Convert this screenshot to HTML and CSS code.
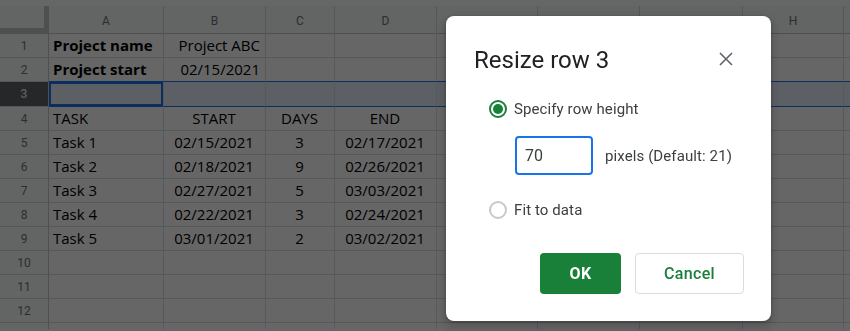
FILE: index.html
```html
<!DOCTYPE html>
<html lang="en">
<head>
<meta charset="utf-8">
<title>Resize row 3</title>
<link rel="stylesheet" href="styles.css">
</head>
<body>
<div class="app">
  <div class="topbar"></div>
  <div class="sheet">
    <div class="corner"></div>
    <div class="colhead">A</div><div class="colhead">B</div><div class="colhead">C</div><div class="colhead">D</div><div class="colhead">E</div><div class="colhead">F</div><div class="colhead">G</div><div class="colhead">H</div><div class="colhead"></div>

    <div class="rowhead">1</div>
    <div class="cell bold">Project name</div><div class="cell right">Project ABC</div><div class="cell"></div><div class="cell"></div><div class="cell"></div><div class="cell"></div><div class="cell"></div><div class="cell"></div><div class="cell"></div>

    <div class="rowhead">2</div>
    <div class="cell bold above-sel">Project start</div><div class="cell right above-sel">02/15/2021</div><div class="cell above-sel"></div><div class="cell above-sel"></div><div class="cell above-sel"></div><div class="cell above-sel"></div><div class="cell above-sel"></div><div class="cell above-sel"></div><div class="cell above-sel"></div>

    <div class="rowhead rowhead-sel">3</div>
    <div class="cell sel active"></div><div class="cell sel"></div><div class="cell sel"></div><div class="cell sel"></div><div class="cell sel"></div><div class="cell sel"></div><div class="cell sel"></div><div class="cell sel"></div><div class="cell sel"></div>

    <div class="rowhead">4</div>
    <div class="cell">TASK</div><div class="cell center">START</div><div class="cell center">DAYS</div><div class="cell center">END</div><div class="cell"></div><div class="cell"></div><div class="cell"></div><div class="cell"></div><div class="cell"></div>

    <div class="rowhead">5</div>
    <div class="cell">Task 1</div><div class="cell center">02/15/2021</div><div class="cell center">3</div><div class="cell center">02/17/2021</div><div class="cell"></div><div class="cell"></div><div class="cell"></div><div class="cell"></div><div class="cell"></div>

    <div class="rowhead">6</div>
    <div class="cell">Task 2</div><div class="cell center">02/18/2021</div><div class="cell center">9</div><div class="cell center">02/26/2021</div><div class="cell"></div><div class="cell"></div><div class="cell"></div><div class="cell"></div><div class="cell"></div>

    <div class="rowhead">7</div>
    <div class="cell">Task 3</div><div class="cell center">02/27/2021</div><div class="cell center">5</div><div class="cell center">03/03/2021</div><div class="cell"></div><div class="cell"></div><div class="cell"></div><div class="cell"></div><div class="cell"></div>

    <div class="rowhead">8</div>
    <div class="cell">Task 4</div><div class="cell center">02/22/2021</div><div class="cell center">3</div><div class="cell center">02/24/2021</div><div class="cell"></div><div class="cell"></div><div class="cell"></div><div class="cell"></div><div class="cell"></div>

    <div class="rowhead">9</div>
    <div class="cell">Task 5</div><div class="cell center">03/01/2021</div><div class="cell center">2</div><div class="cell center">03/02/2021</div><div class="cell"></div><div class="cell"></div><div class="cell"></div><div class="cell"></div><div class="cell"></div>

    <div class="rowhead">10</div>
    <div class="cell"></div><div class="cell"></div><div class="cell"></div><div class="cell"></div><div class="cell"></div><div class="cell"></div><div class="cell"></div><div class="cell"></div><div class="cell"></div>

    <div class="rowhead">11</div>
    <div class="cell"></div><div class="cell"></div><div class="cell"></div><div class="cell"></div><div class="cell"></div><div class="cell"></div><div class="cell"></div><div class="cell"></div><div class="cell"></div>

    <div class="rowhead">12</div>
    <div class="cell"></div><div class="cell"></div><div class="cell"></div><div class="cell"></div><div class="cell"></div><div class="cell"></div><div class="cell"></div><div class="cell"></div><div class="cell"></div>

    <div class="rowhead">13</div>
    <div class="cell"></div><div class="cell"></div><div class="cell"></div><div class="cell"></div><div class="cell"></div><div class="cell"></div><div class="cell"></div><div class="cell"></div><div class="cell"></div>
  </div>
  <div class="bottombar"></div>
</div>

<div class="backdrop"></div>

<div class="dialog" role="dialog" aria-labelledby="dlg-title">
  <div class="dialog-head">
    <h1 id="dlg-title" class="dialog-title">Resize row 3</h1>
    <button class="close" aria-label="Close">
      <svg width="14" height="14" viewBox="0 0 14 14"><path d="M1 1 L13 13 M13 1 L1 13" stroke="#5f6368" stroke-width="1.6" fill="none"/></svg>
    </button>
  </div>
  <div class="option">
    <span class="radio radio-on"><span class="dot"></span></span>
    <span class="label">Specify row height</span>
  </div>
  <div class="size-row">
    <div class="input">70</div>
    <span class="hint">pixels (Default: 21)</span>
  </div>
  <div class="option option-2">
    <span class="radio"></span>
    <span class="label">Fit to data</span>
  </div>
  <div class="actions">
    <button class="btn btn-ok">OK</button>
    <button class="btn btn-cancel">Cancel</button>
  </div>
</div>
</body>
</html>
```

FILE: styles.css
```css
* { box-sizing: border-box; }
html, body { margin: 0; padding: 0; }
body {
  width: 850px;
  height: 331px;
  overflow: hidden;
  background: #fff;
  font-family: "Open Sans", "Liberation Sans", sans-serif;
}
.app {
  display: flex;
  flex-direction: column;
  height: 331px;
  overflow: hidden;
}
.topbar {
  height: 6px;
  flex: none;
  background: #ffffff;
  border-bottom: 0;
}
.bottombar {
  height: 2px;
  flex: none;
  background: #ffffff;
}
.sheet {
  flex: 1;
  min-height: 0;
  overflow: hidden;
  display: grid;
  grid-template-columns: 49px 115px 102px 69px 102px 101px 102px 103px 101px 1fr;
  grid-template-rows: 28px 24px 24px 25px repeat(10, 24px);
  background: #fff;
}
.corner {
  background: #f8f9fa;
  border-right: 5px solid #c4c7c5;
  border-bottom: 6px solid #c4c7c5;
}
.colhead {
  background: #f8f9fa;
  border-right: 1px solid #d5d7da;
  border-bottom: 1px solid #c4c7c5;
  font-family: Roboto, "Liberation Sans", sans-serif;
  font-size: 12px;
  color: #6f747a;
  display: flex;
  align-items: center;
  justify-content: center;
  padding-top: 2px;
}
.rowhead {
  background: #f8f9fa;
  border-right: 1px solid #c4c7c5;
  border-bottom: 1px solid #d5d7da;
  font-family: Roboto, "Liberation Sans", sans-serif;
  font-size: 12px;
  color: #6f747a;
  display: flex;
  align-items: center;
  justify-content: center;
}
.rowhead-sel {
  background: #5f6368;
  color: #e8eaed;
  font-weight: 500;
}
.cell {
  border-right: 1px solid #d9dbde;
  border-bottom: 1px solid #d9dbde;
  font-size: 15px;
  line-height: 23px;
  color: #000;
  padding: 0 5px 0 4px;
  white-space: nowrap;
  overflow: hidden;
}
.bold { font-weight: 700; }
.right { text-align: right; }
.center { text-align: center; }
.above-sel { border-bottom-color: #1a73e8; }
.sel {
  background: #e6eefb;
  border-bottom-color: #1a73e8;
}
.active {
  box-shadow: inset 0 0 0 2px #1a73e8;
}

.backdrop {
  position: fixed;
  inset: 0;
  background: rgba(0, 0, 0, 0.6);
}

.dialog {
  position: fixed;
  left: 446px;
  top: 16px;
  width: 325px;
  height: 305px;
  background: #fff;
  border-radius: 8px;
  box-shadow: 0 4px 8px 3px rgba(0,0,0,.15), 0 1px 3px rgba(0,0,0,.3);
  font-family: Roboto, "Liberation Sans", sans-serif;
  padding: 28px 0 0 0;
}
.dialog-head {
  display: flex;
  align-items: center;
  justify-content: space-between;
  padding: 0 33px 0 28px;
  height: 32px;
}
.dialog-title {
  margin: 0;
  font-size: 24px;
  font-weight: 400;
  color: #202124;
  line-height: 32px;
}
.close {
  width: 24px;
  height: 24px;
  border: 0;
  background: none;
  padding: 0;
  display: flex;
  align-items: center;
  justify-content: center;
  margin-top: -2px;
}
.option {
  display: flex;
  align-items: center;
  gap: 7px;
  margin: 21px 0 0 43px;
  height: 24px;
}
.option-2 { margin-top: 23px; }
.radio {
  width: 18px;
  height: 18px;
  border-radius: 50%;
  border: 2px solid #c6c9cc;
  display: flex;
  align-items: center;
  justify-content: center;
  flex: none;
}
.radio-on { border-color: #188038; }
.dot {
  width: 10px;
  height: 10px;
  border-radius: 50%;
  background: #188038;
}
.label {
  font-size: 15px;
  color: #3c4043;
  letter-spacing: 0.1px;
}
.size-row {
  display: flex;
  align-items: center;
  gap: 12px;
  margin: 15px 0 0 69px;
}
.input {
  width: 78px;
  height: 39px;
  border: 2px solid #1a73e8;
  border-radius: 4px;
  padding: 0 8px;
  font-size: 16px;
  color: #3c4043;
  line-height: 35px;
}
.hint {
  font-size: 15px;
  color: #3c4043;
  letter-spacing: 0.1px;
}
.actions {
  display: flex;
  justify-content: flex-end;
  gap: 14px;
  padding-right: 27px;
  margin-top: 31px;
}
.btn {
  height: 41px;
  border-radius: 4px;
  font-family: Roboto, "Liberation Sans", sans-serif;
  font-size: 16px;
  letter-spacing: 0.3px;
}
.btn-ok {
  width: 81px;
  background: #188038;
  border: 0;
  color: #fff;
  font-weight: 700;
}
.btn-cancel {
  width: 109px;
  background: #fff;
  border: 1px solid #dadce0;
  color: #188038;
  font-weight: 500;
}
```
